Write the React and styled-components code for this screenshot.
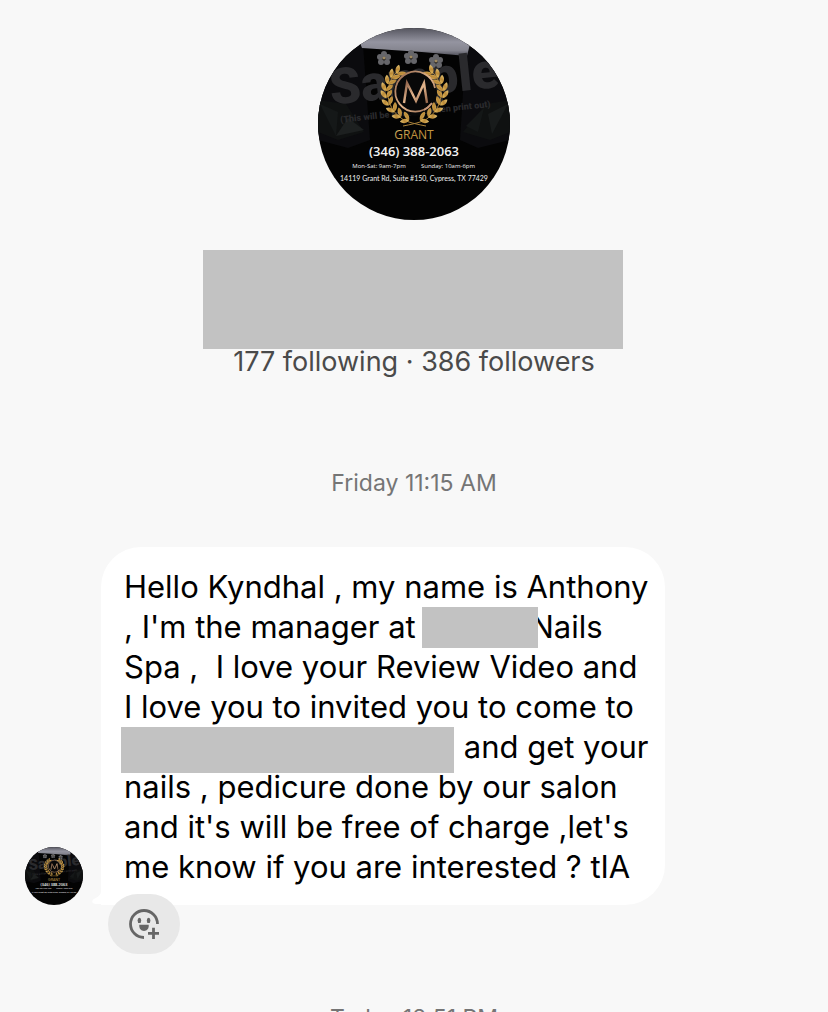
import React from 'react'
import styled, { createGlobalStyle } from 'styled-components'

export default function App() {
  return (
    <>
      <GlobalStyle />
      <Chat>
        <Profile>
          <Avatar $size={192} id="profile" />
          <NameBlock />
          <Stats>177 following · 386 followers</Stats>
        </Profile>
        <Stamp>Friday 11:15 AM</Stamp>
        <MessageRow>
          <Avatar $size={58} id="sender" />
          <Bubble>
            <Tail viewBox="0 0 20 20" aria-hidden="true">
              <path d="M9 0V6C9 10 6 12 2 14C-1 16 0 19 4 19H20V0Z" fill="#fff" />
            </Tail>
            <Line>Hello Kyndhal , my name is Anthony</Line>
            <Line>, I'm the manager at <Redacted $width={116} $height={41} $left={-2} $right={-8} />Nails</Line>
            <Line>Spa ,  I love your Review Video and</Line>
            <Line>I love you to invited you to come to</Line>
            <Line><Redacted $width={333} $height={46} $left={-3} $right={1} /> and get your</Line>
            <Line>nails , pedicure done by our salon</Line>
            <Line>and it's will be free of charge ,let's</Line>
            <Line>me know if you are interested ? tIA</Line>
          </Bubble>
        </MessageRow>
        <ReactButton type="button" aria-label="Add reaction">
          <AddReactionIcon />
        </ReactButton>
        <Stamp>Today 12:51 PM</Stamp>
      </Chat>
    </>
  )
}

// leaves down the left branch of the wreath: x, y, angle
const leaves = [
  [80, 43, -42], [74, 47, -50], [70, 53, -62], [67, 60, -78],
  [67, 67, -92], [69, 75, -108], [74, 82, -124], [80, 88, -142], [88, 92, -158],
]

function Branch({ fill }) {
  return (
    <g fill={fill}>
      <path d="M81 42C66 54 66 78 83 90C87 93 92 95 108 98" fill="none" stroke="#a9823c" strokeWidth="1" />
      {leaves.map(([x, y, a]) => (
        <g key={y} transform={`translate(${x} ${y}) rotate(${a + 90})`}>
          <path d="M1 3C-3 2 -5 -1 -4 -5C0 -4 2 -1 1 3Z" />
          <path d="M1 3C1 -1 3 -4 7 -5C8 -1 5 2 1 3Z" />
        </g>
      ))}
    </g>
  )
}

function Avatar({ $size, id }) {
  const gold = `url(#${id}-gold)`
  return (
    <AvatarSvg $size={$size} viewBox="0 0 192 192" role="img" aria-label="Grant salon">
      <defs>
        <clipPath id={`${id}-clip`}><circle cx="96" cy="96" r="96" /></clipPath>
        <linearGradient id={`${id}-gold`} x1="0" y1="0" x2="1" y2="1">
          <stop offset="0" stopColor="#e8c877" />
          <stop offset="0.5" stopColor="#bb8a38" />
          <stop offset="1" stopColor="#e5bf62" />
        </linearGradient>
        <linearGradient id={`${id}-silver`} x1="0" y1="0" x2="0" y2="1">
          <stop offset="0" stopColor="#55555f" />
          <stop offset="0.5" stopColor="#9494a0" />
          <stop offset="0.8" stopColor="#85858f" />
          <stop offset="1" stopColor="#4c4c56" />
        </linearGradient>
        <linearGradient id={`${id}-rose`} x1="0" y1="0" x2="1" y2="1">
          <stop offset="0" stopColor="#8d6048" />
          <stop offset="0.5" stopColor="#e2b58c" />
          <stop offset="1" stopColor="#94654a" />
        </linearGradient>
      </defs>
      <g clipPath={`url(#${id}-clip)`}>
        <rect width="192" height="192" fill="#030303" />
        <path d="M0 16H45L52 112L30 120L0 112Z" fill="#0b0b0e" />
        <path d="M192 16H148L142 112L160 120L192 112Z" fill="#0b0b0e" />
        <path d="M0 72L28 76L46 104L20 112L0 104Z" fill="#0f1111" />
        <path d="M2 76L20 84L18 108Z" fill="#151818" />
        <path d="M18 108L46 102L30 90Z" fill="#1d2020" />
        <path d="M192 72L168 76L145 104L172 112L192 104Z" fill="#0f1111" />
        <path d="M190 76L170 86L174 106Z" fill="#181b1b" />
        <path d="M148 98L166 80L160 104Z" fill="#141717" />
        <path d="M36 0H156L149 28Q96 23 44 20Z" fill={`url(#${id}-silver)`} />
        <Watermark transform="rotate(-6 96 60)" x="12" y="68" fontSize="50">Sample</Watermark>
        <Watermark transform="rotate(-6 96 86)" x="22" y="87" fontSize="9">(This will be removed when print out)</Watermark>
        {[[66, 30], [93, 29], [118, 33]].map(([x, y]) => (
          <g key={x} transform={`translate(${x} ${y})`} fill="#66666a">
            <circle cx="0" cy="-4" r="3" />
            <circle cx="4" cy="-1" r="3" />
            <circle cx="3" cy="4" r="3" />
            <circle cx="-3" cy="4" r="3" />
            <circle cx="-4" cy="-1" r="3" />
            <circle r="1.5" fill="#a08a60" />
          </g>
        ))}
        <circle cx="97" cy="66" r="22" fill="#080808" />
        <Branch fill={gold} />
        <g transform="translate(193 0) scale(-1 1)"><Branch fill={gold} /></g>
        <path d="M113 76A20 20 0 1 1 117 60" fill="none" stroke={`url(#${id}-rose)`} strokeWidth="1.8" />
        <path d="M114 75A20 20 0 0 1 106 82" fill="none" stroke="#c5977a" strokeWidth="1.8" />
        <path d="M86 75L89 55L98 73L106 55L109 75" fill="none" stroke={`url(#${id}-rose)`} strokeWidth="2.4" />
        <CardText x="96" y="111" fontSize="12" fill={gold}>GRANT</CardText>
        <CardText x="96" y="128" fontSize="13" fontWeight="600">(346) 388-2063</CardText>
        <CardText x="61" y="140" fontSize="6">Mon-Sat: 9am-7pm</CardText>
        <CardText x="130" y="140" fontSize="6">Sunday: 10am-6pm</CardText>
        <CardText $font="Lato" x="96" y="153" fontSize="7">14119 Grant Rd, Suite #150, Cypress, TX 77429</CardText>
      </g>
    </AvatarSvg>
  )
}

function AddReactionIcon() {
  return (
    <svg width="32" height="32" viewBox="0 0 32 32" fill="none" aria-hidden="true">
      <path d="M29.5 16A13.5 13.5 0 1 0 16 29.5" stroke="#666" strokeWidth="2.8" />
      <ellipse cx="11.4" cy="12.4" rx="1.8" ry="2.7" fill="#666" />
      <ellipse cx="20.6" cy="12.4" rx="1.8" ry="2.7" fill="#666" />
      <path d="M11.3 16.8H20.7C21.2 20.6 18.8 23 16 23C13.2 23 10.8 20.6 11.3 16.8Z" fill="#666" />
      <path d="M25.5 19.8V31M20 25.4H31" stroke="#666" strokeWidth="2.8" />
    </svg>
  )
}

const GlobalStyle = createGlobalStyle`
  body {
    margin: 0;
    background: #f8f8f8;
    font-family: Inter, 'Liberation Sans', sans-serif;
  }

  html, body, #root {
    height: 100%;
  }
`

const Chat = styled.main`
  height: 100%;
  overflow: hidden;
  display: flex;
  flex-direction: column;
  box-sizing: border-box;
  padding-top: 28px;

  > * {
    flex-shrink: 0;
  }
`

const Profile = styled.header`
  display: flex;
  flex-direction: column;
  align-items: center;
  margin-bottom: 94px;
`

const AvatarSvg = styled.svg`
  width: ${p => p.$size}px;
  height: ${p => p.$size}px;
  flex-shrink: 0;
`

const Watermark = styled.text`
  font-family: Roboto, 'Liberation Sans', sans-serif;
  font-weight: 900;
  fill: #2a2a2d;
`

const CardText = styled.text`
  font-family: ${p => p.$font || "'Open Sans'"}, 'Noto Sans', sans-serif;
  text-anchor: middle;
  fill: ${p => p.fill || '#f2f2f2'};
`

const NameBlock = styled.div`
  width: 420px;
  height: 99px;
  margin-top: 30px;
  margin-right: 2px;
  background: #c2c2c2;
`

const Stats = styled.p`
  margin: 0;
  font-size: 27px;
  line-height: 26px;
  color: #4a4a4a;
`

const Stamp = styled.time`
  font-size: 23px;
  line-height: 28px;
  text-align: center;
  color: #757575;
`

const MessageRow = styled.div`
  display: flex;
  align-items: flex-end;
  gap: 18px;
  margin-top: 50px;
  padding: 0 25px;
`

const Bubble = styled.div`
  position: relative;
  box-sizing: border-box;
  width: 564px;
  padding: 20px 0 18px 23px;
  border-radius: 40px 40px 40px 0;
  background: #fff;
  color: #000;
`

const Tail = styled.svg`
  position: absolute;
  left: -9px;
  bottom: 0;
  width: 20px;
  height: 20px;
`

const Line = styled.div`
  height: 40px;
  font-size: 31px;
  line-height: 40px;
  white-space: pre;
`

const Redacted = styled.span`
  position: relative;
  display: inline-block;
  vertical-align: top;
  width: ${p => p.$width}px;
  height: ${p => p.$height}px;
  margin-left: ${p => p.$left}px;
  margin-right: ${p => p.$right}px;
  background: #c2c2c2;
`

const ReactButton = styled.button`
  position: relative;
  display: flex;
  align-items: center;
  justify-content: center;
  width: 72px;
  height: 60px;
  margin: -11px 0 50px 108px;
  padding: 0;
  border: 0;
  border-radius: 30px;
  background: #e8e8e8;
  cursor: pointer;
`
